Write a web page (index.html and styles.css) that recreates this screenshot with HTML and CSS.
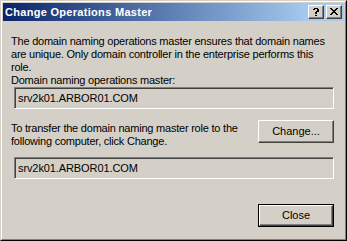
FILE: index.html
```html
<!DOCTYPE html>
<html>
<head>
<meta charset="utf-8">
<link rel="stylesheet" href="styles.css">
</head>
<body>
<div class="window">
  <div class="frame">
    <div class="titlebar">
      <span class="title">Change Operations Master</span>
      <div class="caption-buttons">
        <div class="cap-btn">
          <svg width="8" height="8" viewBox="0 0 8 8" shape-rendering="crispEdges">
            <path fill="#000" d="M2 0h4v1H2zM1 1h2v1H1zM5 1h2v3H5zM4 3h2v1H4zM3 4h2v2H3zM3 7h2v1H3z"/>
          </svg>
        </div>
        <div class="cap-btn">
          <svg width="8" height="7" viewBox="0 0 8 7" shape-rendering="crispEdges">
            <path fill="#000" d="M0 0h2v1H0zM6 0h2v1H6zM1 1h2v1H1zM5 1h2v1H5zM2 2h4v1H2zM3 3h2v1H3zM2 4h4v1H2zM1 5h2v1H1zM5 5h2v1H5zM0 6h2v1H0zM6 6h2v1H6z"/>
          </svg>
        </div>
      </div>
    </div>
    <div class="content">
      <p class="text">The domain naming operations master ensures that domain names<br>are unique. Only domain controller in the enterprise performs this<br>role.</p>
      <p class="text">Domain naming operations master:</p>
      <div class="field">srv2k01.ARBOR01.COM</div>
      <div class="row">
        <p class="text row-text">To transfer the domain naming master role to the<br>following computer, click Change.</p>
        <div class="button">Change...</div>
      </div>
      <div class="field field2">srv2k01.ARBOR01.COM</div>
      <div class="footer">
        <div class="button default"><div class="button-inner">Close</div></div>
      </div>
    </div>
  </div>
</div>
</body>
</html>
```

FILE: styles.css
```css
html, body {
  margin: 0;
  padding: 0;
  background: #d4d0c8;
}
body {
  font-family: "Liberation Sans", Arial, sans-serif;
  font-size: 11px;
  color: #000;
}
.window {
  width: 347px;
  height: 241px;
  box-sizing: border-box;
  border: 1px solid;
  border-color: #d4d0c8 #000 #000 #d4d0c8;
  background: #d4d0c8;
}
.frame {
  height: 100%;
  box-sizing: border-box;
  border: 1px solid;
  border-color: #fff #808080 #808080 #fff;
  padding: 1px;
  display: flex;
  flex-direction: column;
}
.titlebar {
  height: 18px;
  flex: none;
  display: flex;
  align-items: center;
  background: linear-gradient(to right, #0a246a 0%, #a6caf0 90%, #a6caf0 100%);
  padding-left: 2px;
  padding-right: 2px;
}
.title {
  color: #fff;
  font-weight: bold;
  font-size: 11px;
  letter-spacing: 0.3px;
  flex: 1;
}
.caption-buttons {
  display: flex;
  gap: 2px;
}
.cap-btn {
  width: 16px;
  height: 14px;
  box-sizing: border-box;
  background: #d4d0c8;
  border: 1px solid;
  border-color: #fff #404040 #404040 #fff;
  box-shadow: inset -1px -1px 0 #808080;
  display: flex;
  align-items: center;
  justify-content: center;
  padding-left: 0px;
}
.cap-btn svg {
  display: block;
  margin-top: -1px;
}
.content {
  padding: 14px 10px 0 8px;
  flex: 1;
  display: flex;
  flex-direction: column;
}
.text {
  margin: 0;
  line-height: 13px;
  letter-spacing: -0.22px;
  white-space: nowrap;
}
.field {
  margin-left: 3px;
  height: 22px;
  box-sizing: border-box;
  border: 1px solid;
  border-color: #808080 #fff #fff #808080;
  box-shadow: inset 1px 1px 0 #404040, inset -1px -1px 0 #d4d0c8;
  display: flex;
  align-items: center;
  padding-left: 3px;
  line-height: 13px;
  letter-spacing: -0.1px;
}
.row {
  margin-top: 11px;
  display: flex;
  justify-content: space-between;
  align-items: flex-start;
}
.row-text {
  padding-top: 2px;
}
.button {
  width: 76px;
  height: 23px;
  box-sizing: border-box;
  border: 1px solid;
  border-color: #fff #404040 #404040 #fff;
  box-shadow: inset -1px -1px 0 #808080;
  display: flex;
  align-items: center;
  justify-content: center;
  line-height: 13px;
}
.button.default {
  border: 1px solid #000;
  box-shadow: none;
  padding: 0;
}
.button-inner {
  flex: 1;
  align-self: stretch;
  display: flex;
  align-items: center;
  justify-content: center;
  border: 1px solid;
  border-color: #fff #404040 #404040 #fff;
  box-shadow: inset -1px -1px 0 #808080;
}
.field2 {
  margin-top: 9px;
}
.footer {
  margin-top: 25px;
  display: flex;
  justify-content: flex-end;
}
```
